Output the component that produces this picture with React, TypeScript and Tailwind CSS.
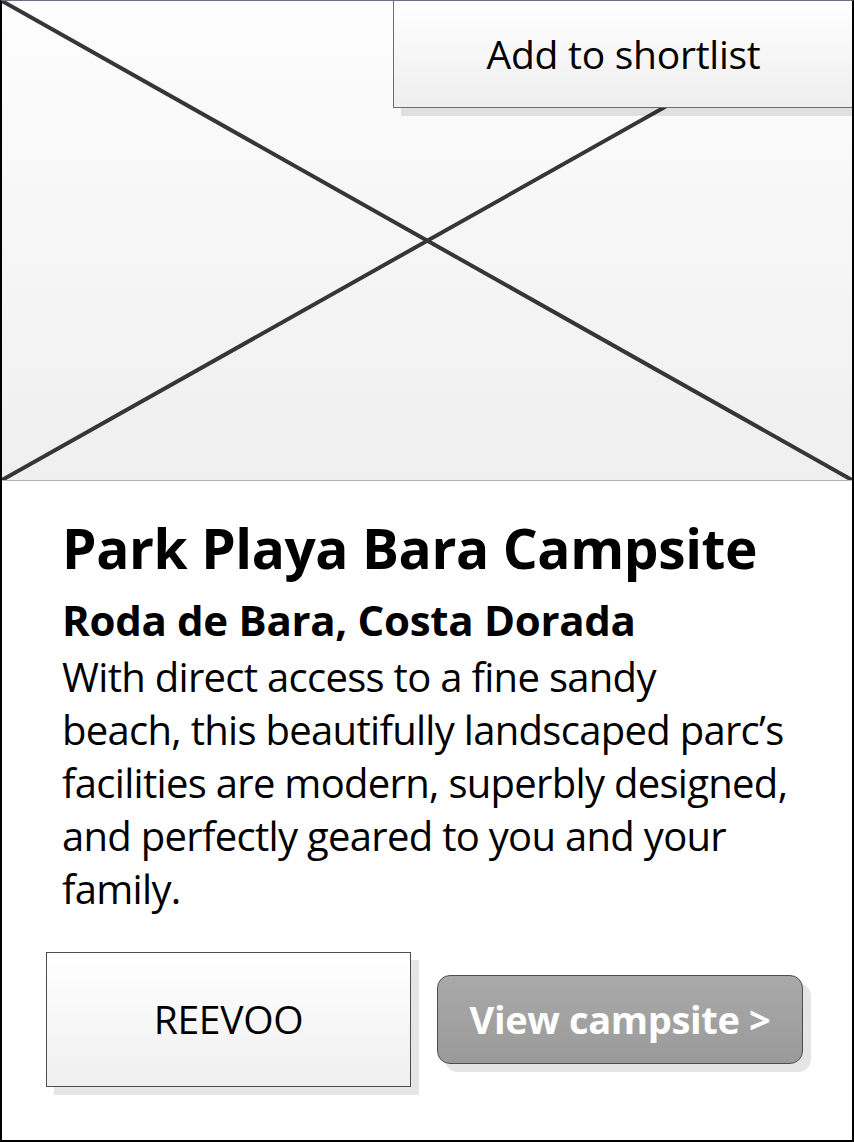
import React from 'react';

export default function App() {
  const bodyLines = [
    'With direct access to a fine sandy',
    'beach, this beautifully landscaped parc\u2019s',
    'facilities are modern, superbly designed,',
    'and perfectly geared to you and your',
    'family.',
  ];

  return (
    <div
      className="w-[854px] h-[1142px] bg-white border-l-2 border-r-2 border-b-2 border-black border-t border-t-gray-500 flex flex-col overflow-hidden font-['Open_Sans',sans-serif] text-black"
    >
      {/* Image placeholder */}
      <div className="relative h-[480px] shrink-0 bg-gradient-to-b from-[#fdfdfd] to-[#efefef] border-b border-[#b4b4b4]">
        <svg className="absolute inset-0 w-full h-full" viewBox="0 0 850 479" preserveAspectRatio="none">
          <line x1="0" y1="0" x2="850" y2="479" stroke="#363636" strokeWidth="4" />
          <line x1="0" y1="479" x2="862" y2="-6" stroke="#363636" strokeWidth="4" />
        </svg>
        <div className="absolute top-[-1px] right-[-2px] w-[461px] h-[108px]">
          <div className="absolute left-[8px] top-[8px] w-full h-full bg-black/10" />
          <div className="relative w-full h-full border border-[#6e6e6e] bg-gradient-to-b from-white to-[#eeeeee] flex items-center justify-center">
            <span className="text-[39px] tracking-[-0.25px]">Add to shortlist</span>
          </div>
        </div>
      </div>

      {/* Details */}
      <div className="pl-[60px] pt-[35px]">
        <h1 className="text-[55px] font-bold leading-[64px] tracking-[-0.4px]">Park Playa Bara Campsite</h1>
        <h2 className="text-[42px] font-bold leading-[50px] mt-[15px] tracking-[-0.3px]">Roda de Bara, Costa Dorada</h2>
        <p className="text-[40px] leading-[53px] mt-[5px] tracking-[-0.7px]">
          {bodyLines.map((l) => (
            <span key={l} className="block whitespace-nowrap">{l}</span>
          ))}
        </p>
      </div>

      {/* Actions */}
      <div className="flex items-center gap-[26px] pl-[44px] mt-[37px]">
        <div className="relative w-[365px] h-[135px]">
          <div className="absolute left-[8px] top-[8px] w-full h-full bg-black/10" />
          <div className="relative w-full h-full border border-[#4e4e4e] bg-gradient-to-b from-white to-[#efefef] flex items-center justify-center">
            <span className="text-[39px] tracking-[-0.3px]">REEVOO</span>
          </div>
        </div>
        <div className="relative w-[366px] h-[89px]">
          <div className="absolute left-[8px] top-[8px] w-full h-full rounded-[13px] bg-black/10" />
          <div className="relative w-full h-full rounded-[13px] border border-[#4e4e4e] bg-gradient-to-b from-[#a9a9a9] to-[#9a9a9a] flex items-center justify-center">
            <span className="text-[38px] font-bold text-white tracking-[-0.35px]">View campsite &gt;</span>
          </div>
        </div>
      </div>
    </div>
  );
}
